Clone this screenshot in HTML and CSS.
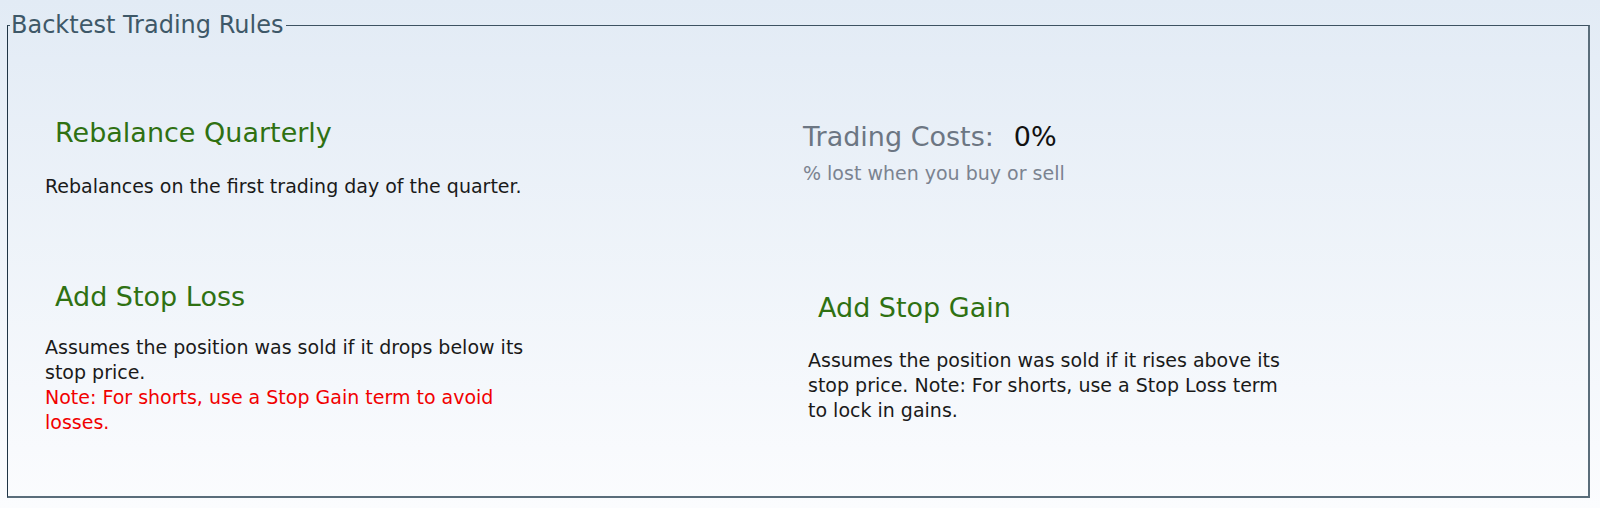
FILE: index.html
```html
<!DOCTYPE html>
<html>
<head>
<meta charset="utf-8">
<link rel="stylesheet" href="styles.css">
</head>
<body>
<fieldset class="rules">
  <legend class="rules-title">Backtest Trading Rules</legend>
  <div class="grid">
    <div class="cell cell-rebalance">
      <h2 class="rule-head">Rebalance Quarterly</h2>
      <p class="rule-desc">Rebalances on the first trading day of the quarter.</p>
    </div>
    <div class="cell cell-costs">
      <div class="costs-head"><span class="costs-label">Trading Costs:</span><span class="costs-value">0%</span></div>
      <div class="costs-sub">% lost when you buy or sell</div>
    </div>
    <div class="cell cell-loss">
      <h2 class="rule-head">Add Stop Loss</h2>
      <p class="rule-desc">Assumes the position was sold if it drops below its stop price.<br><span class="note">Note: For shorts, use a Stop Gain term to avoid losses.</span></p>
    </div>
    <div class="cell cell-gain">
      <h2 class="rule-head">Add Stop Gain</h2>
      <p class="rule-desc">Assumes the position was sold if it rises above its stop price. Note: For shorts, use a Stop Loss term to lock in gains.</p>
    </div>
  </div>
</fieldset>
</body>
</html>
```
FILE: styles.css
```css
html, body {
  height: 100%;
}
body {
  margin: 0;
  padding: 11px 10px 0 7px;
  box-sizing: border-box;
  background: linear-gradient(to bottom, #e2ebf5 0%, #fbfcfe 100%);
  font-family: "DejaVu Sans", Verdana, sans-serif;
  color: #1a1a1a;
}
.rules {
  margin: 0;
  padding: 0;
  border-style: solid;
  border-width: 1px 2px 2px 1px;
  border-color: #3d5262 #5a6d7a #5a6d7a #1f3445;
  min-width: 0;
}
.rules-title {
  margin-left: 2px;
  padding: 0 3px 0 1px;
  font-size: 24px;
  line-height: 28px;
  color: #3e5868;
}
.grid {
  display: grid;
  grid-template-columns: 763px 1fr;
  padding: 78px 0 61px 37px;
  row-gap: 85px;
  align-items: start;
}
.rule-head {
  margin: 0 0 0 10px;
  font-size: 27px;
  line-height: 32px;
  font-weight: normal;
  color: #2f7112;
}
.rule-desc {
  margin: 22px 0 0 0;
  font-size: 19px;
  line-height: 25px;
  max-width: 495px;
}
.cell-rebalance .rule-desc {
  margin-top: 25px;
}
.cell-rebalance {
  margin-bottom: -3px;
}
.cell-gain .rule-desc {
  margin-top: 24px;
  max-width: 484px;
}
.note {
  color: #f10000;
}
.cell-costs {
  margin-top: 4px;
  margin-left: -5px;
}
.costs-head {
  font-size: 27px;
  line-height: 32px;
}
.costs-label {
  color: #6c7683;
  margin-right: 20px;
}
.costs-value {
  color: #111;
}
.costs-sub {
  margin-top: 8px;
  font-size: 19px;
  line-height: 24px;
  color: #7b8390;
}
.cell-gain {
  margin-top: 11px;
}
```
